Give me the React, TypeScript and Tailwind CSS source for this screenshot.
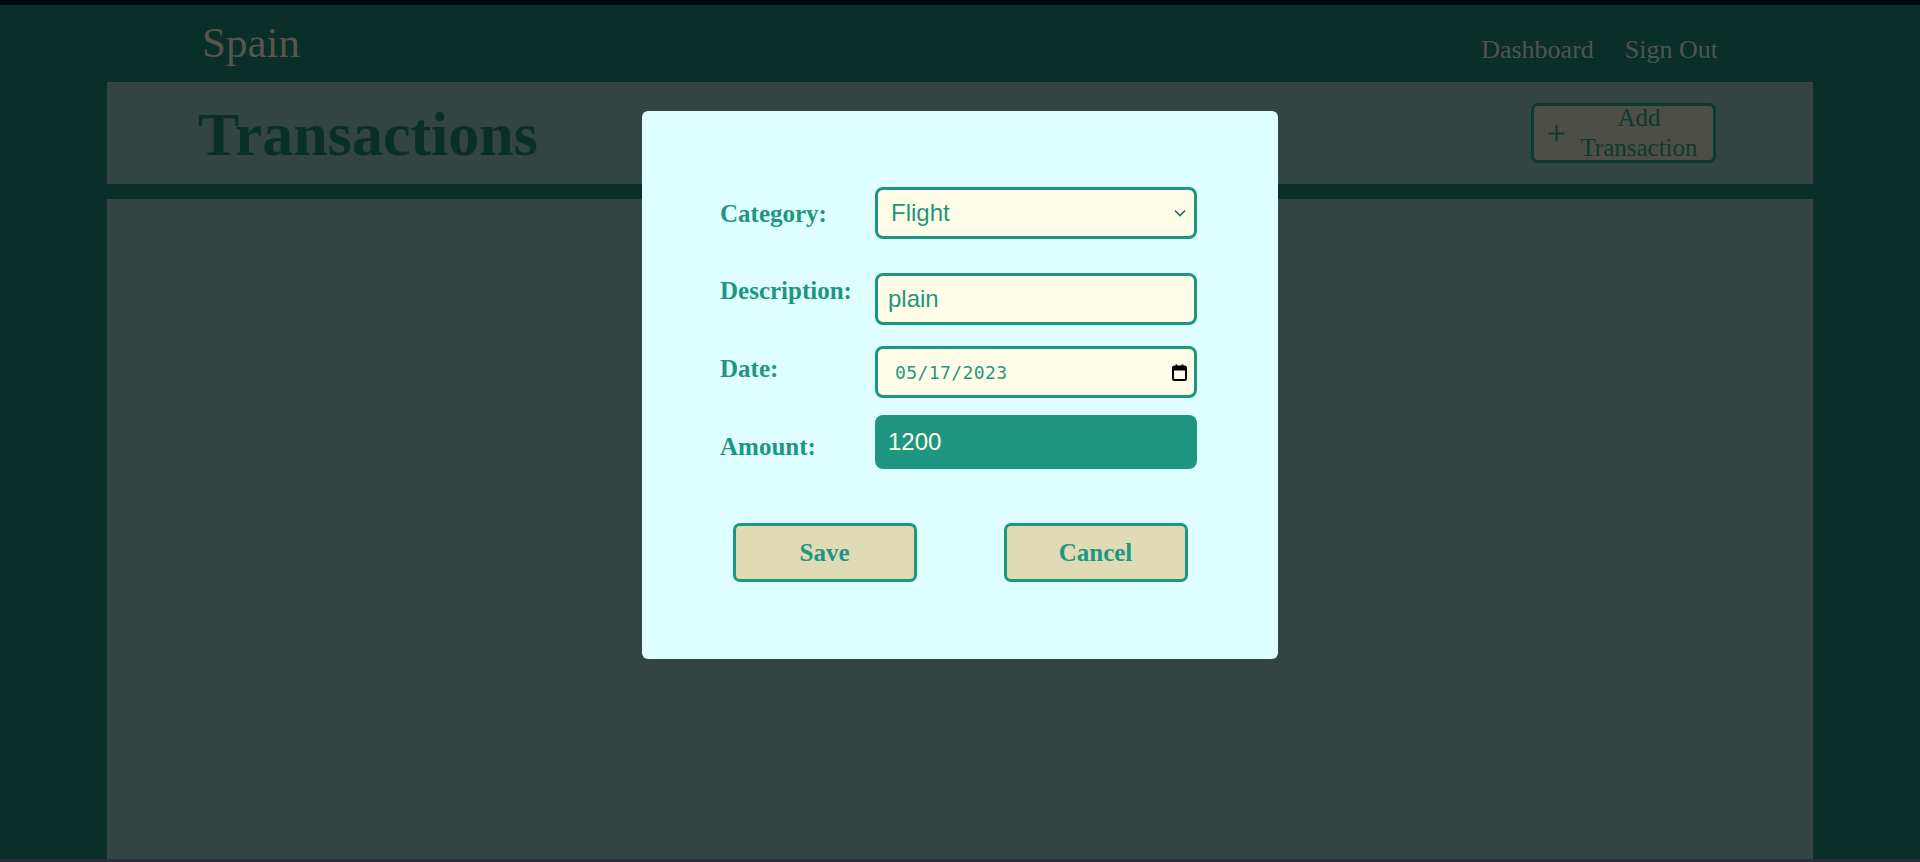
import React from "react";

function PlusIcon() {
  return (
    <svg width="17" height="17" viewBox="0 0 17 17" className="shrink-0">
      <path d="M8.5 0.5v16M0.5 8.5h16" stroke="#0b3a30" strokeWidth="2" fill="none" />
    </svg>
  );
}

function Chevron() {
  return (
    <svg width="12" height="8" viewBox="0 0 12 8">
      <path d="M1 1.5l5 5 5-5" stroke="#17705f" strokeWidth="1.6" fill="none" />
    </svg>
  );
}

function CalendarIcon() {
  return (
    <svg width="15" height="17" viewBox="0 0 15 17">
      <rect x="1" y="2.5" width="13" height="13.5" rx="1.5" fill="none" stroke="#000" strokeWidth="2" />
      <rect x="1" y="2.5" width="13" height="4" fill="#000" />
      <rect x="3.5" y="0.5" width="2" height="3" fill="#000" />
      <rect x="9.5" y="0.5" width="2" height="3" fill="#000" />
    </svg>
  );
}

export default function App() {
  return (
    <div className="relative w-[1920px] h-[862px] overflow-hidden bg-[#0a2e28] flex flex-col font-['Liberation_Serif',serif]">
      <div className="h-[5px] shrink-0 bg-[#030a10]" />
      <nav className="h-[77px] shrink-0 flex justify-between px-[202px]">
        <div className="mt-[13px] text-[43px] leading-[49px] text-[#57554e]">Spain</div>
        <div className="mt-[30px] flex gap-[31px] text-[26px] leading-[30px] text-[#4e5550]">
          <span>Dashboard</span>
          <span>Sign Out</span>
        </div>
      </nav>
      <div className="mx-[107px] h-[102px] shrink-0 bg-[#324543] flex justify-between items-start pl-[91px] pr-[97px]">
        <h1 className="mt-[17px] text-[62px] leading-[71px] font-bold text-[#0a2e28]">Transactions</h1>
        <button className="mt-[21px] w-[185px] h-[60px] border-[3px] border-[#0b3a30] rounded-[7px] bg-[#4d4e47] flex items-center pl-[14px] gap-[13px] text-[#0b3a30]">
          <PlusIcon />
          <span className="w-[122px] text-center text-[25px] leading-[30px]">Add Transaction</span>
        </button>
      </div>
      <div className="mx-[107px] mt-[15px] flex-1 bg-[#324543]" />
      <div className="h-[3px] shrink-0 bg-[#2c2e3b]" />

      <div className="absolute left-[642px] top-[111px] w-[636px] h-[548px] rounded-[6px] bg-[#dffffe] pt-[76px]">
        <div className="pl-[78px] flex items-center">
          <label className="w-[155px] text-[25px] leading-[29px] font-bold text-[#1f9682]">Category:</label>
          <div className="w-[322px] h-[52px] border-[3px] border-[#1f9682] rounded-[8px] bg-[#fffde8] flex items-center justify-between pl-[13px] pr-[8px] font-['Liberation_Sans',Arial,sans-serif] text-[24px] text-[#1f9682]">
            <span>Flight</span>
            <Chevron />
          </div>
        </div>
        <div className="mt-[34px] pl-[78px] flex items-start">
          <label className="mt-[3px] w-[155px] text-[25px] leading-[29px] font-bold text-[#1f9682]">Description:</label>
          <div className="w-[322px] h-[52px] border-[3px] border-[#1f9682] rounded-[8px] bg-[#fffde8] flex items-center pl-[10px] font-['Liberation_Sans',Arial,sans-serif] text-[24px] text-[#1f9682]">
            plain
          </div>
        </div>
        <div className="mt-[21px] pl-[78px] flex items-start">
          <label className="mt-[8px] w-[155px] text-[25px] leading-[29px] font-bold text-[#1f9682]">Date:</label>
          <div className="w-[322px] h-[52px] border-[3px] border-[#1f9682] rounded-[8px] bg-[#fffde8] flex items-center justify-between pl-[17px] pr-[7px] font-['DejaVu_Sans_Mono',monospace] text-[18px] tracking-[0.4px] text-[#1f9682]">
            <span>05/17/2023</span>
            <CalendarIcon />
          </div>
        </div>
        <div className="mt-[17px] pl-[78px] flex items-start">
          <label className="mt-[17px] w-[155px] text-[25px] leading-[29px] font-bold text-[#1f9682]">Amount:</label>
          <div className="w-[322px] h-[54px] rounded-[8px] bg-[#1f9682] flex items-center pl-[13px] font-['Liberation_Sans',Arial,sans-serif] text-[24px] text-[#fffde8]">
            1200
          </div>
        </div>
        <div className="mt-[54px] flex justify-center gap-[87px]">
          <button className="w-[184px] h-[59px] border-[3px] border-[#1f9682] rounded-[7px] bg-[#dfdbb5] text-[25px] leading-[29px] font-bold text-[#1f9682]">
            Save
          </button>
          <button className="w-[184px] h-[59px] border-[3px] border-[#1f9682] rounded-[7px] bg-[#dfdbb5] text-[25px] leading-[29px] font-bold text-[#1f9682]">
            Cancel
          </button>
        </div>
      </div>
    </div>
  );
}
